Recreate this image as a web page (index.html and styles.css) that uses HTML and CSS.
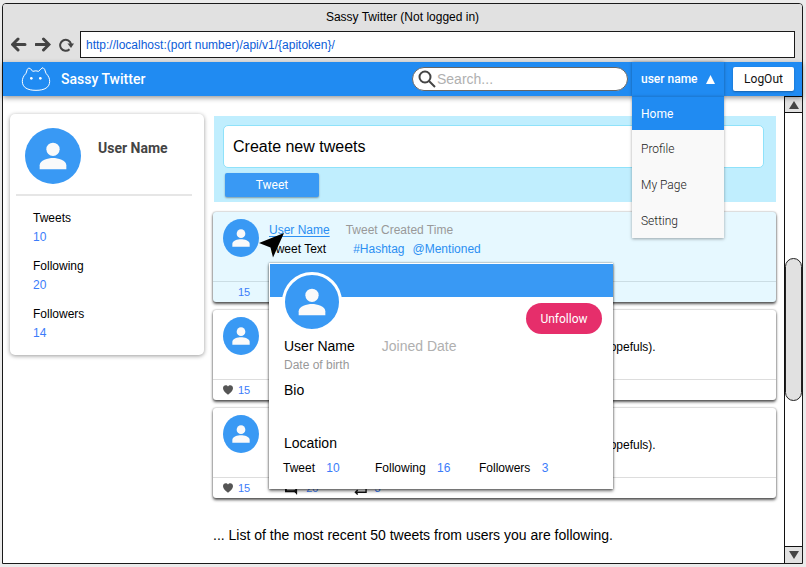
FILE: index.html
```html
<!DOCTYPE html>
<html lang="en">
<head>
<meta charset="utf-8">
<title>Sassy Twitter</title>
<link rel="stylesheet" href="styles.css">
</head>
<body>
<svg width="0" height="0" class="defs" aria-hidden="true">
  <symbol id="person" viewBox="0 0 24 24"><circle cx="12" cy="8" r="4"/><path d="M4 20v-2.500c0-3 5-4.300 8-4.300s8 1.300 8 4.300v2.500z"/></symbol>
  <symbol id="heart" viewBox="0 0 24 24"><path d="M12 23.500C6 18 0 13.500 0 7.500 0 3.500 3 .5 6.500 .5c2.300 0 4.300 1.200 5.500 3 1.200-1.800 3.200-3 5.500-3C21 .5 24 3.500 24 7.500c0 6-6 10.500-12 16z"/></symbol>
  <symbol id="comment" viewBox="0 0 14 14"><path d="M1 1h11v10l-2-1H1z" fill="none" stroke="currentColor" stroke-width="2"/><path d="M9 9h4v5z" fill="currentColor"/></symbol>
  <symbol id="retweet" viewBox="0 0 14 14"><path d="M1 6V3h11M13 6v5H2M4 8.500l-2.500 2.500 2.500 2.500M10 .5l2.500 2.500-2.500 2.500" fill="none" stroke="currentColor" stroke-width="1.500"/></symbol>
</svg>
<div class="window">
  <header class="chrome">
    <div class="title">Sassy Twitter (Not logged in)</div>
    <div class="toolbar">
      <button class="nav" aria-label="Back"><svg width="16" height="16" viewBox="0 0 16 16"><path d="M14 7.500H2M7 2L1.500 7.500 7 13"/></svg></button>
      <button class="nav" aria-label="Forward"><svg width="16" height="16" viewBox="0 0 16 16"><path d="M1 7.500h12.500M8.500 2l5.500 5.500-5.500 5.500"/></svg></button>
      <button class="nav" aria-label="Reload"><svg width="16" height="16" viewBox="0 0 16 16"><path d="M10.500 12.200A5.500 5.500 0 1 1 12 7" class="thin"/><path d="M8.500 6.500h6.500l-3 4.500z" class="solid"/></svg></button>
      <input class="address" aria-label="Address" value="http://localhost:(port number)/api/v1/{apitoken}/">
    </div>
  </header>
  <nav class="appbar">
    <a class="brand" href="#"><svg width="30" height="26" viewBox="63 200 90 78"><path d="M86 206Q82 206 78 222C70 230 67 238 67 246C67 264 82 273 108 273C134 273 149 264 149 246C149 238 146 230 138 222Q134 206 129 205Q124 206 116 216Q108 213 98 216Q92 206 86 206Z" fill="none" stroke="#fff" stroke-width="3"/><circle cx="94" cy="237" r="4"/><circle cx="121" cy="237" r="4"/></svg><span>Sassy Twitter</span></a>
    <label class="search"><svg width="20" height="20" viewBox="0 0 20 20"><circle cx="8" cy="8" r="5.500"/><path d="M12 12l6 6"/></svg><input type="search" aria-label="Search" placeholder="Search..."></label>
    <div class="account">
      <button class="account-toggle"><span>user name</span><svg width="9" height="9" viewBox="0 0 9 9"><path d="M4.500 0L9 9H0z"/></svg></button>
      <div class="menu">
        <a class="current" href="#">Home</a>
        <a href="#">Profile</a>
        <a href="#">My Page</a>
        <a href="#">Setting</a>
      </div>
    </div>
    <button class="logout">LogOut</button>
  </nav>
  <div class="viewport">
    <main class="page">
      <aside class="profile">
        <div class="profile-head">
          <span class="avatar large"><svg><use href="#person"/></svg></span>
          <h2>User Name</h2>
        </div>
        <dl class="counts">
          <div><dt>Tweets</dt><dd>10</dd></div>
          <div><dt>Following</dt><dd>20</dd></div>
          <div><dt>Followers</dt><dd>14</dd></div>
        </dl>
      </aside>
      <section class="timeline">
        <form class="composer">
          <input aria-label="New tweet" value="Create new tweets">
          <button type="button">Tweet</button>
        </form>
        <article class="tweet active">
          <div class="tweet-body">
            <span class="avatar"><svg><use href="#person"/></svg></span>
            <div class="tweet-text">
              <p class="meta"><a class="author" href="#">User Name</a><time>Tweet Created Time</time></p>
              <p class="line"><span class="words">Tweet Text</span><a href="#">#Hashtag</a><a href="#">@Mentioned</a></p>
            </div>
          </div>
          <footer><span class="stat"><i class="blank"></i>15</span></footer>
          <svg class="pointer" width="26" height="26" viewBox="0 0 26 26"><path d="M0 10L25 0 14 24.500 11.500 14.500z"/></svg>
          <div class="hovercard">
            <div class="banner"></div>
            <div class="card-top">
              <span class="avatar ringed"><svg><use href="#person"/></svg></span>
              <button class="unfollow">Unfollow</button>
            </div>
            <p class="names"><span>User Name</span><span class="joined">Joined Date</span></p>
            <p class="birth">Date of birth</p>
            <p class="bio">Bio</p>
            <p class="location">Location</p>
            <div class="card-counts">
              <span>Tweet <a href="#">10</a></span>
              <span>Following <a href="#">16</a></span>
              <span>Followers <a href="#">3</a></span>
            </div>
          </div>
        </article>
        <article class="tweet">
          <div class="tweet-body">
            <span class="avatar"><svg><use href="#person"/></svg></span>
            <p class="excerpt">hopefuls).</p>
          </div>
          <footer><span class="stat"><svg><use href="#heart"/></svg>15</span></footer>
        </article>
        <article class="tweet">
          <div class="tweet-body">
            <span class="avatar"><svg><use href="#person"/></svg></span>
            <p class="excerpt">hopefuls).</p>
          </div>
          <footer>
            <span class="stat"><svg><use href="#heart"/></svg>15</span>
            <span class="stat wide"><svg><use href="#comment"/></svg>20</span>
            <span class="stat wide"><svg><use href="#retweet"/></svg>3</span>
          </footer>
        </article>
        <p class="note">... List of the most recent 50 tweets from users you are following.</p>
      </section>
    </main>
    <div class="scrollbar">
      <button aria-label="Scroll up"><svg width="10" height="8" viewBox="0 0 10 8"><path d="M5 0l5 8H0z"/></svg></button>
      <div class="track"><div class="thumb"></div></div>
      <button aria-label="Scroll down"><svg width="10" height="8" viewBox="0 0 10 8"><path d="M5 8l5-8H0z"/></svg></button>
    </div>
  </div>
</div>
</body>
</html>
```
FILE: styles.css
```css
* { box-sizing: border-box; }
body {
  margin: 0;
  padding: 3px 3px 3px 2px;
  background: #ebebeb;
  color: #000;
  font: 12px/16px "Liberation Sans", Arial, sans-serif;
}
p, h2, dl, dd { margin: 0; }
a { color: #2b8ff2; text-decoration: none; }
button, input { font: inherit; margin: 0; }
button { border: 0; padding: 0; cursor: pointer; }
.defs { position: absolute; }

.window {
  display: flex;
  flex-direction: column;
  min-height: calc(100vh - 6px);
  border: 1px solid #1a1a1a;
  border-radius: 4px 4px 0 0;
  background: #fff;
}

/* Browser chrome */
.chrome { background: #e1e1e1; border-radius: 3px 3px 0 0; padding-bottom: 4px; }
.title { line-height: 27px; text-align: center; }
.toolbar { display: flex; align-items: center; gap: 8px; padding: 0 7px 0 8px; }
.nav { display: flex; background: none; }
.nav path { fill: none; stroke: #444; stroke-width: 3; stroke-linecap: round; }
.nav .thin { stroke-width: 2; stroke-linecap: butt; }
.nav .solid { fill: #444; stroke: none; }
.address {
  flex: 1;
  height: 27px;
  margin-left: -3px;
  padding: 0 5px;
  border: 1px solid #1a1a1a;
  background: #fff;
  color: #0b5cd8;
}

/* Application bar */
.appbar {
  position: relative;
  z-index: 3;
  display: flex;
  align-items: center;
  height: 34px;
  padding-right: 8px;
  background: #208bf2;
  box-shadow: 0 2px 5px rgba(0, 0, 0, .4);
  font-family: Roboto, sans-serif;
}
.brand {
  display: flex;
  align-items: center;
  gap: 10px;
  margin-right: auto;
  padding-left: 18px;
  color: #fff;
  font-size: 14px;
  font-weight: 500;
}
.brand circle { fill: #fff; }
.search {
  display: flex;
  align-items: center;
  width: 216px;
  height: 24px;
  padding-left: 4px;
  border: 1px solid #666;
  border-radius: 12px;
  background: #fff;
}
.search svg { fill: none; stroke: #444; stroke-width: 2; }
.search input {
  flex: 1;
  min-width: 0;
  border: 0;
  padding: 0;
  background: none;
  outline: 0;
  font: 14px/20px "Liberation Sans", Arial, sans-serif;
}
.search input::placeholder { color: #b0b0b0; }
.account { position: relative; width: 92px; height: 34px; margin: 0 9px 0 4px; box-shadow: 0 0 3px rgba(0, 0, 0, .35); }
.account-toggle {
  display: flex;
  align-items: center;
  gap: 8px;
  width: 100%;
  height: 100%;
  padding-left: 9px;
  background: #208bf2;
  color: #fff;
  font-weight: 500;
}
.account-toggle svg { fill: #fff; }
.menu {
  position: absolute;
  top: 34px;
  left: 0;
  right: 0;
  background: #f9f9f9;
  box-shadow: 0 1px 3px rgba(0, 0, 0, .35);
}
.menu a { display: block; padding: 2px 0 0 9px; color: #222; font-size: 12px; font-weight: 300; line-height: 34px; }
.menu .current { background: #208bf2; color: #fff; font-weight: 400; line-height: 31px; border-top: 1px solid #1c7cd8; }
.logout {
  width: 61px;
  height: 24px;
  border-radius: 2px;
  background: #fff;
  color: #111;
  box-shadow: 0 1px 2px rgba(0, 0, 0, .3);
}

/* Page */
.viewport { display: flex; flex: 1; }
.page { display: flex; flex: 1; align-items: flex-start; gap: 9px; padding: 18px 8px 16px 7px; }
.avatar {
  display: flex;
  flex: none;
  align-items: center;
  justify-content: center;
  width: 36px;
  height: 38px;
  border-radius: 50%;
  background: #3999f4;
}
.avatar svg { width: 26px; height: 26px; fill: #fafafa; }
.avatar.large { width: 56px; height: 56px; }
.avatar.large svg, .ringed svg { width: 40px; height: 40px; }

.profile {
  flex: 0 0 194px;
  padding: 14px 12px 12px 6px;
  border-radius: 5px;
  background: #fff;
  box-shadow: 0 1px 4px rgba(0, 0, 0, .4);
}
.profile-head { display: flex; gap: 17px; padding: 0 0 10px 9px; border-bottom: 2px solid #e6e6e6; }
.profile h2 { padding-top: 12px; color: #444; font: 700 14px/16px Roboto, sans-serif; }
.counts { display: grid; gap: 10px; padding: 13px 0 0 17px; line-height: 19px; }
.counts dd, .stat, .card-counts a { color: #3b7cfa; }

.timeline { flex: 1; min-width: 0; padding-top: 2px; }
.composer { margin: 0 0 10px 1px; padding: 9px 12px 5px 9px; background: #c0eefe; }
.composer input {
  display: block;
  width: 100%;
  height: 43px;
  padding: 0 9px;
  border: 1px solid #8fe2fa;
  border-radius: 5px;
  background: #fff;
  font-size: 16px;
}
.composer button {
  display: block;
  width: 94px;
  height: 24px;
  margin: 5px 0 0 2px;
  border-radius: 2px;
  background: #3999f4;
  color: #fff;
  box-shadow: 0 1px 2px rgba(0, 0, 0, .35);
  font-family: Roboto, sans-serif;
}

.tweet {
  position: relative;
  margin-bottom: 8px;
  border-radius: 3px;
  background: #fff;
  box-shadow: 0 2px 3px rgba(0, 0, 0, .65), 0 0 2px rgba(0, 0, 0, .4);
}
.tweet.active { z-index: 2; background: #e6f8ff; }
.tweet-body { display: flex; gap: 10px; height: 69px; padding: 7px 10px; }
.tweet-text { display: grid; align-content: start; gap: 3px; padding-top: 3px; }
.meta { display: flex; gap: 16px; color: #999; }
.author { text-decoration: underline; text-underline-offset: 2px; }
.line { display: flex; gap: 8px; }
.words { margin-right: 19px; }
.excerpt { padding: 22px 0 0 334px; }
.tweet footer { display: flex; gap: 35px; height: 21px; padding-left: 10px; border-top: 1px solid #ddd; font-size: 11px; line-height: 20px; }
.tweet.active footer { border-color: #cbdde4; }
.stat { display: flex; align-items: center; gap: 5px; }
.stat svg, .blank { width: 10px; height: 10px; fill: #555; color: #111; }
.stat.wide { gap: 8px; }
.stat.wide svg { width: 13px; height: 13px; }

.pointer { position: absolute; top: 21px; left: 46px; }
.hovercard {
  position: absolute;
  top: 51px;
  left: 56px;
  width: 344px;
  padding: 1px 0 13px 1px;
  background: #fff;
  box-shadow: 0 2px 3px rgba(0, 0, 0, .55), 0 0 2px rgba(0, 0, 0, .45);
  font-size: 14px;
}
.banner { height: 33px; background: #3999f4; }
.card-top { display: flex; align-items: flex-end; justify-content: space-between; margin-top: -25px; padding: 0 11px 0 12px; }
.avatar.ringed { box-sizing: content-box; width: 54px; height: 54px; border: 3px solid #fff; background: #3999f4; }
.unfollow {
  width: 76px;
  height: 31px;
  margin-bottom: -2px;
  border-radius: 16px;
  background: #e62e6b;
  color: #fff;
  font: 400 12px/16px Roboto, sans-serif;
}
.names, .birth, .bio, .location { padding-left: 14px; }
.names { display: flex; gap: 27px; padding-top: 6px; }
.joined { color: #b0b0b0; }
.birth { padding-top: 3px; color: #999; font-size: 12px; }
.bio { padding-top: 9px; }
.location { padding-top: 37px; }
.card-counts { display: grid; grid-template-columns: 92px 104px auto; padding: 9px 0 0 13px; font-size: 12px; }
.card-counts a { margin-left: 8px; }
.note { padding-top: 21px; font-size: 14px; line-height: 16px; }

/* Scrollbar */
.scrollbar { display: flex; flex-direction: column; width: 18px; border-left: 1px solid #111; }
.scrollbar button { display: flex; align-items: center; justify-content: center; height: 17px; background: #e1e1e1; border: 0 solid #111; }
.scrollbar button:first-child { border-width: 1px 0; }
.scrollbar button:last-child { border-top-width: 1px; }
.scrollbar svg { fill: #444; }
.track { display: flex; flex: 1; flex-direction: column; justify-content: center; }
.thumb { height: 33%; border: 1px solid #222; border-radius: 9px; background: #e1e1e1; }
```
